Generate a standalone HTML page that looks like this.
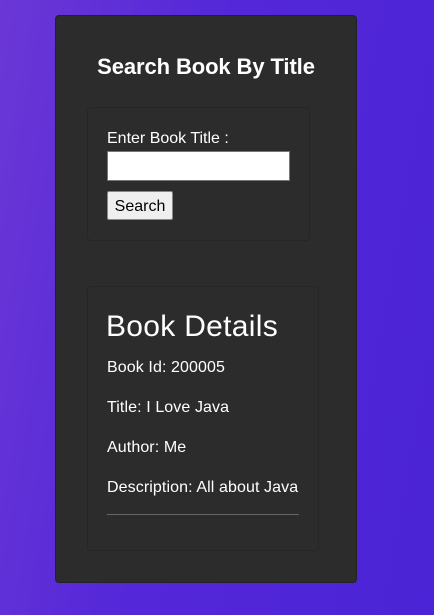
<!DOCTYPE html>
<html><head><style>
*{margin:0;padding:0;box-sizing:border-box}
body{width:434px;height:615px;overflow:hidden;background:linear-gradient(100deg,#6b37d6 0%,#5528d8 40%,#4a24d6 100%);font-family:"Liberation Sans",sans-serif;color:#fff;position:relative}
.card{position:absolute;left:55px;top:15px;width:302px;height:568px;background:#2c2c2c;border-radius:4px;border:1px solid #222}
.abs{position:absolute;white-space:nowrap}
.box{position:absolute;border:1px solid #262626;border-radius:4px}
</style></head><body>
<div class="card"></div>
<div class="abs" style="left:0;width:412px;text-align:center;top:54px;font-size:22px;font-weight:bold;letter-spacing:-0.1px">Search Book By Title</div>
<div class="box" style="left:87px;top:107px;width:223px;height:134px"></div>
<div class="abs" style="left:107px;top:130px;font-size:16px">Enter Book Title :</div>
<div class="abs" style="left:107px;top:151px;width:183px;height:30px;background:#fff;border:1px solid #777"></div>
<div class="abs" style="left:107px;top:191px;width:66px;height:29px;background:#efefef;border:1px solid #888;border-radius:2px;color:#000;font-size:16px;text-align:center;line-height:29px">Search</div>
<div class="box" style="left:87px;top:286px;width:232px;height:265px"></div>
<div class="abs" style="left:106px;top:310px;font-size:30px;letter-spacing:0.3px">Book Details</div>
<div class="abs" style="left:107px;top:359px;font-size:16px;letter-spacing:0.1px">Book Id: 200005</div>
<div class="abs" style="left:107px;top:399px;font-size:16px;letter-spacing:0.1px">Title: I Love Java</div>
<div class="abs" style="left:107px;top:439px;font-size:16px;letter-spacing:0.1px">Author: Me</div>
<div class="abs" style="left:107px;top:479px;font-size:16px;letter-spacing:0.1px">Description: All about Java</div>
<div class="abs" style="left:107px;top:514px;width:192px;height:1px;background:#666"></div>
</body></html>
